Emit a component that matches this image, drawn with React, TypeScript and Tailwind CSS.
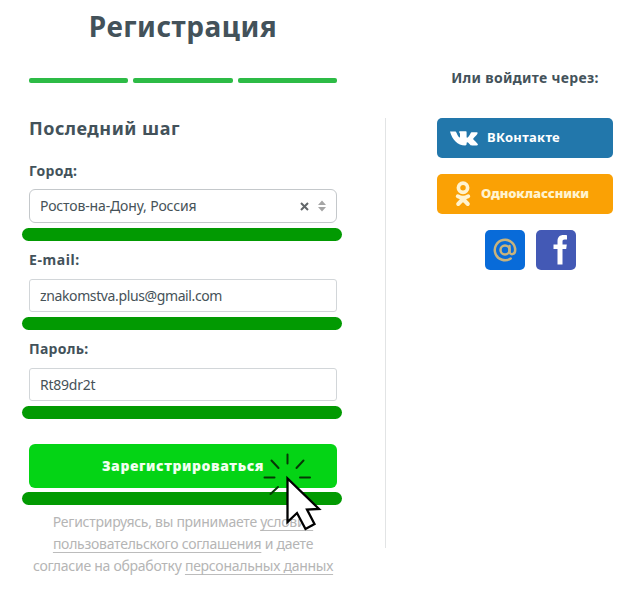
import { useState } from 'react'

function Marker() {
  return <div className="-ml-[7px] -mr-[5px] h-[13px] rounded-full bg-[#029a02]" />
}

function Cursor() {
  return (
    <svg className="absolute left-[262px] top-[452px] w-[60px] h-[80px]" viewBox="0 0 60 80" fill="none">
      <path
        d="M25.500 2.500v9M9.500 8.500l7 7.500M41.500 8.500l-7 7.500M2.500 25.500h10M38 25.500h10M16 35l-7.500 7"
        stroke="#063806" strokeWidth="2" strokeLinecap="round"
      />
      <path d="M25.500 26.500v43.500l9.500-9 8.500 16 9-5-7.500-14.500 12-.5z" fill="#fff" stroke="#000" strokeWidth="2.300" strokeLinejoin="miter" />
    </svg>
  )
}

function VkIcon() {
  return (
    <svg className="w-[28px] h-[15px]" viewBox="0 0 28 15" fill="#fff">
      <path d="M0 .5h5c.8 0 1.100.4 1.400 1.100 1.100 2.800 2.400 5 3.100 5 .4 0 .5-.3.500-1.400V3C10 1.600 9 1.500 9 1c0-.4.400-.7.900-.7h5.700c.8 0 1 .4 1 1.200v4.200c0 .8.300 1.100.6 1.100.8 0 2.500-2.400 3.400-4.500.3-.8.700-1.100 1.400-1.100h4.400c1.100 0 1.400.5 1.100 1.300-.5 1.500-4.300 4.700-4.300 5.400 0 .8 4.700 4.100 4.700 5.600 0 .6-.5.900-1.200.9h-4.800c-1 0-1.500-.4-2.200-1.200-1-1.200-1.800-2-2.400-2-.5 0-.7.400-.7 1.200v.7c0 .9-.5 1.300-1.400 1.300C7.500 14.400 2.300 8.800 0 .5z" />
    </svg>
  )
}

function OkIcon() {
  return (
    <svg className="w-[16px] h-[26px]" viewBox="0 0 16 26" fill="none" stroke="#fff3cf">
      <circle cx="8" cy="6.800" r="4.600" strokeWidth="3.700" />
      <path d="M2.800 15.300q5.200 3 10.400 0M8 18l-4.800 5M8 18l4.800 5" strokeWidth="4" strokeLinecap="round" />
    </svg>
  )
}

const INPUT = 'block w-full h-[33px] border border-[#d2d6d9] rounded-[3px] px-2.5 pb-px text-[14px] text-[#465258] bg-white outline-none'
const LABEL = 'block text-[14px] leading-5 font-bold text-[#43525a]'
const LINK = 'underline decoration-1 decoration-[#bcbcbc] underline-offset-[3px] [text-decoration-skip-ink:none]'

export default function App() {
  const [email, setEmail] = useState('znakomstva.plus@gmail.com')
  const [password, setPassword] = useState('Rt89dr2t')

  return (
    <div className="relative w-[640px] h-[600px] overflow-hidden bg-white flex items-start font-['Noto_Sans',sans-serif]">
      <form className="ml-[29px] w-[308px] flex flex-col" onSubmit={e => e.preventDefault()}>
        <h1 className="mt-[6px] h-10 text-center text-[28px] leading-10 font-bold tracking-[0.5px] text-[#43525a]">Регистрация</h1>
        <div className="mt-8 flex gap-[5px]">
          <div className="flex-1 h-[5px] rounded-[2px] bg-[#2dbb46]" />
          <div className="flex-1 h-[5px] rounded-[2px] bg-[#2dbb46]" />
          <div className="flex-1 h-[5px] rounded-[2px] bg-[#2dbb46]" />
        </div>
        <h2 className="mt-[33px] text-[18px] leading-6 font-bold tracking-[0.5px] text-[#43525a]">Последний шаг</h2>

        <label className={`${LABEL} mt-[21px] tracking-[0.3px]`}>Город:</label>
        <div className="mt-2 mb-[5px] h-[34px] border border-[#c4c8cb] rounded-[6px] pl-2.5 pr-[9px] flex items-center text-[14px] text-[#465258]">
          <span className="flex-1 pb-px tracking-[-0.15px]">Ростов-на-Дону, Россия</span>
          <svg className="w-[9px] h-[9px] mr-[8px]" viewBox="0 0 9 9" fill="none">
            <path d="M1 1l7 7M8 1L1 8" stroke="#626669" strokeWidth="2" />
          </svg>
          <svg className="w-[10px] h-[12px]" viewBox="0 0 10 12" fill="#a5a5a5">
            <path d="M5 .5l4 4.500H1zM5 11.500l4-4.500H1z" />
          </svg>
        </div>
        <Marker />

        <label className={`${LABEL} mt-[9px] tracking-[0.6px]`}>E-mail:</label>
        <input className={`${INPUT} mt-[9px] mb-[5px] tracking-[-0.38px]`} value={email} onChange={e => setEmail(e.target.value)} />
        <Marker />

        <label className={`${LABEL} mt-[9px] tracking-[0.3px]`}>Пароль:</label>
        <input className={`${INPUT} mt-[9px] mb-[5px] tracking-[-0.25px]`} value={password} onChange={e => setPassword(e.target.value)} />
        <Marker />

        <button type="submit" className="mt-[25px] mb-[4px] h-11 pb-0.5 rounded-[6px] bg-[#04d415] text-[14px] font-black tracking-[0.6px] text-[#f2fff0]">
          Зарегистрироваться
        </button>
        <Marker />

        <p className="mt-[6px] -mx-2 text-center text-[14px] leading-[22px] tracking-[-0.27px] text-[#b5b5b5] whitespace-nowrap">
          Регистрируясь, вы принимаете <span className={LINK}>условия</span><br />
          <span className={LINK}>пользовательского соглашения</span> и даете<br />
          согласие на обработку <span className={LINK}>персональных данных</span>
        </p>
      </form>

      <div className="ml-[48px] mt-[118px] w-px h-[430px] bg-[#e2e4e5]" />

      <div className="ml-[51px] mt-[68px] w-[176px] flex flex-col items-center">
        <div className="text-[14px] leading-5 font-bold tracking-[0.33px] text-[#43525a] whitespace-nowrap">Или войдите через:</div>
        <button className="mt-[30px] w-full h-10 rounded-[5px] bg-[#2277ab] pl-[13px] flex items-center gap-[9px] text-[13px] font-bold tracking-[0.3px] text-white">
          <VkIcon />
          ВКонтакте
        </button>
        <button className="mt-4 w-full h-10 rounded-[5px] bg-[#faa105] pl-[18px] flex items-center gap-[10px] text-[13px] font-black tracking-[-0.1px] text-[#fff3cf]">
          <OkIcon />
          Одноклассники
        </button>
        <div className="mt-4 ml-[11px] flex gap-[11px]">
          <button className="w-10 h-10 rounded-[5px] bg-[#086bd9] flex items-center justify-center">
            <svg className="w-6 h-6" viewBox="0 0 24 24" fill="none" stroke="#c8b37c" strokeWidth="2.500" strokeLinecap="round">
              <circle cx="12" cy="12" r="4.500" />
              <path d="M16.500 8v5.500c0 4 5.700 3.500 5.700-1.500a10.200 10.200 0 1 0-4.500 8.500" />
            </svg>
          </button>
          <button className="w-10 h-10 rounded-[5px] bg-[#4359b5] flex items-center justify-center">
            <svg className="w-10 h-10" viewBox="0 0 40 40" fill="#fff">
              <path d="M21.500 34.500V19h-4v-4.500h4v-3.300c0-4.200 2.300-6.200 6-6.200 1.600 0 2.700.1 3.500.2v4.300h-2.300c-1.700 0-2.200.8-2.200 2.200v2.800h4.300l-.6 4.500h-3.700v15.500z" />
            </svg>
          </button>
        </div>
      </div>

      <Cursor />
    </div>
  )
}
